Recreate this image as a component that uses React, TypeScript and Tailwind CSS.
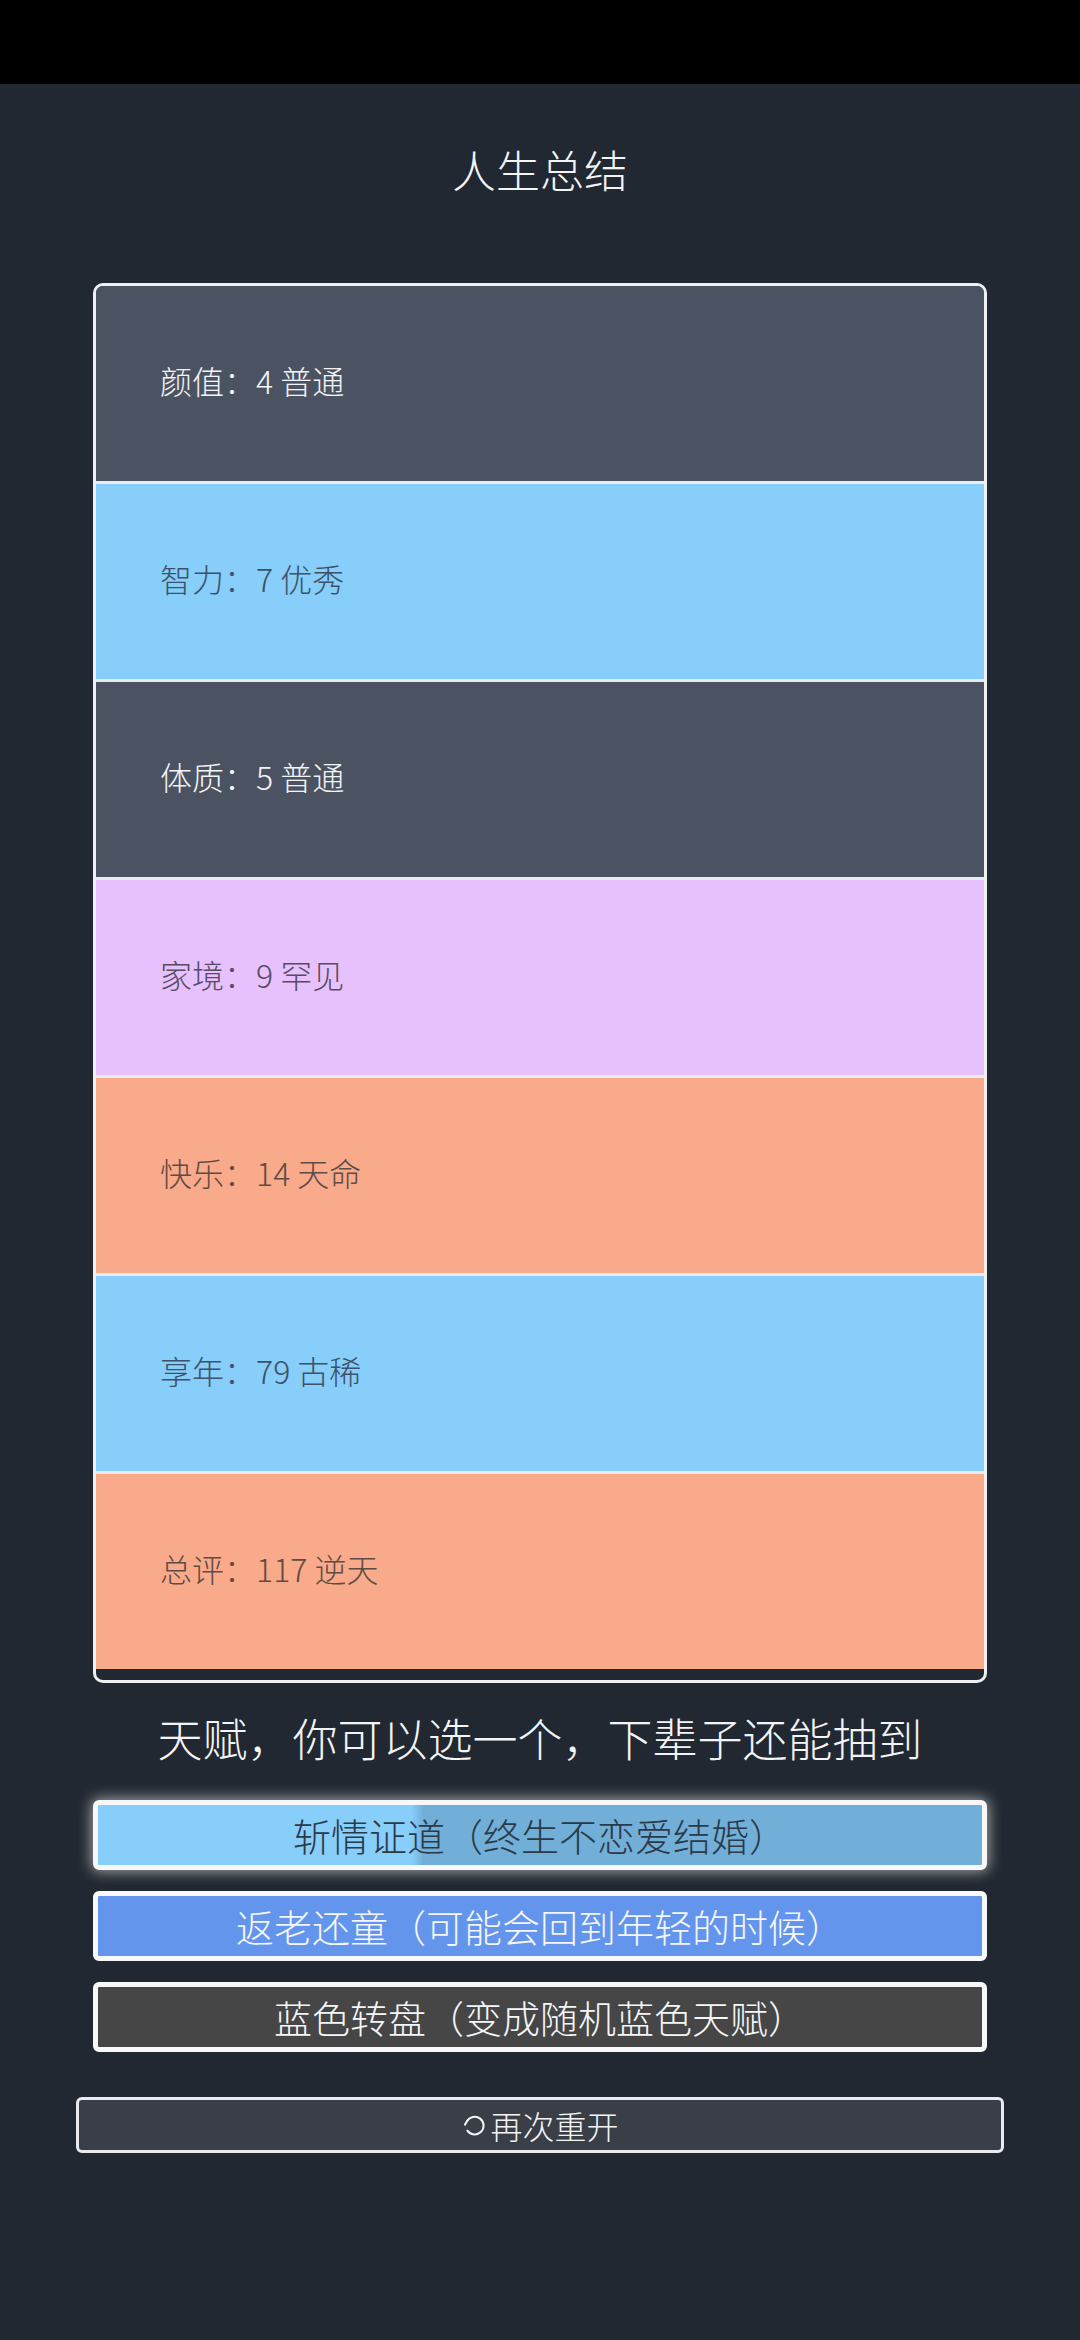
import React from 'react';

type Row = { label: string; value: string; bg: string; text: string };

const rows: Row[] = [
  { label: '颜值', value: '4 普通', bg: 'bg-[#4b5362]', text: 'text-[#f3f4f6]' },
  { label: '智力', value: '7 优秀', bg: 'bg-[#87cefa]', text: 'text-[#3d5268]' },
  { label: '体质', value: '5 普通', bg: 'bg-[#4b5362]', text: 'text-[#f3f4f6]' },
  { label: '家境', value: '9 罕见', bg: 'bg-[#e7c1fe]', text: 'text-[#574b63]' },
  { label: '快乐', value: '14 天命', bg: 'bg-[#f8aa8a]', text: 'text-[#5e4b45]' },
  { label: '享年', value: '79 古稀', bg: 'bg-[#87cefa]', text: 'text-[#3d5268]' },
  { label: '总评', value: '117 逆天', bg: 'bg-[#f8aa8a]', text: 'text-[#5e4b45]' },
];

function RestartIcon() {
  return (
    <svg width="27" height="31" viewBox="0 0 24 28" fill="none" className="mr-[2px]">
      {/* open circle, gap on the left side */}
      <path
        d="M5.2 10.2 A8 8 0 1 1 5.6 18.6"
        stroke="#f3f4f6"
        strokeWidth="1.8"
        strokeLinecap="round"
      />
      <path d="M5.2 10.2 L3.4 13.2" stroke="#f3f4f6" strokeWidth="1.8" strokeLinecap="round" />
    </svg>
  );
}

export default function App() {
  return (
    <div
      className="min-h-[2340px] w-full bg-[#222831] font-light text-[#f0f0f0]"
      style={{ fontFamily: '"Noto Sans CJK SC", "Noto Sans", sans-serif' }}
    >
      {/* Status bar */}
      <div className="h-[84px] bg-black" />

      {/* Title */}
      <h1 className="mt-[63px] text-center text-[44px] leading-[44px] font-light text-[#f3f4f6]">
        人生总结
      </h1>

      {/* Summary list */}
      <div className="mx-[93px] mt-[92px] overflow-hidden rounded-[10px] border-[3px] border-[#eef0f3] pb-[11px]">
        {rows.map((row, i) => (
          <div
            key={row.label}
            className={`box-content flex h-[187px] items-center pb-[8px] pl-[64px] text-[32px] leading-[32px] ${row.bg} ${row.text} ${
              i < rows.length - 1 ? 'border-b-[3px] border-[#e9ebef]' : ''
            }`}
          >
            {row.label}：{row.value}
          </div>
        ))}
      </div>

      {/* Talent choice */}
      <p className="mt-[33px] text-center text-[45px] leading-[44px] text-[#f3f4f6]">
        天赋，你可以选一个，下辈子还能抽到
      </p>

      <div className="mx-[93px] mt-[40px] flex flex-col gap-[21px]">
        <button className="flex h-[70px] items-center justify-center rounded-[6px] border-[5px] border-[#f7f8fa] bg-[linear-gradient(to_right,#87cefa_35.5%,#71afd8_36.8%)] text-[38px] leading-[38px] font-light text-[#2b3a48] shadow-[0_0_14px_2px_rgba(255,255,255,0.55)]">
          斩情证道（终生不恋爱结婚）
        </button>
        <button className="flex h-[70px] items-center justify-center rounded-[6px] border-[5px] border-[#f7f8fa] bg-[#6495ed] text-[38px] leading-[38px] font-light text-[#f5f6f8]">
          返老还童（可能会回到年轻的时候）
        </button>
        <button className="flex h-[70px] items-center justify-center rounded-[6px] border-[5px] border-[#f7f8fa] bg-[#464646] text-[38px] leading-[38px] font-light text-[#f5f6f8]">
          蓝色转盘（变成随机蓝色天赋）
        </button>
      </div>

      {/* Restart */}
      <div className="mx-[76px] mt-[45px]">
        <button className="flex h-[56px] w-full items-center justify-center rounded-[6px] border-[3px] border-[#e8eaf0] bg-[#3a3e47] text-[32px] leading-[32px] font-light text-[#f3f4f6]">
          <RestartIcon />
          再次重开
        </button>
      </div>
    </div>
  );
}
